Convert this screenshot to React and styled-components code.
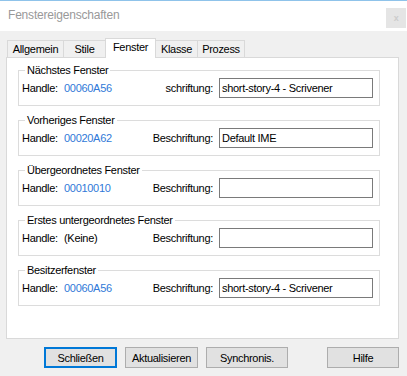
import styled, { createGlobalStyle } from "styled-components";

const GlobalStyle = createGlobalStyle`
  html, body {
    margin: 0;
    padding: 0;
    background: #f0f0f0;
  }
  body {
    font-family: "Liberation Sans", Arial, sans-serif;
    font-size: 11px;
    letter-spacing: -0.3px;
    color: #000;
  }
`;

const TABS = [
  { label: "Allgemein", width: 57 },
  { label: "Stile", width: 43 },
  { label: "Fenster", width: 51, active: true },
  { label: "Klasse", width: 43 },
  { label: "Prozess", width: 48 },
];

const GROUPS = [
  { title: "Nächstes Fenster", handle: "00060A56", label: "schriftung:", caption: "short-story-4 - Scrivener" },
  { title: "Vorheriges Fenster", handle: "00020A62", label: "Beschriftung:", caption: "Default IME" },
  { title: "Übergeordnetes Fenster", handle: "00010010", label: "Beschriftung:", caption: "" },
  { title: "Erstes untergeordnetes Fenster", handle: "(Keine)", none: true, label: "Beschriftung:", caption: "" },
  { title: "Besitzerfenster", handle: "00060A56", label: "Beschriftung:", caption: "short-story-4 - Scrivener" },
];

const BUTTONS = [
  { label: "Schließen", width: 73, gap: 44, primary: true },
  { label: "Aktualisieren", width: 73, gap: 8 },
  { label: "Synchronis.", width: 82, gap: 8 },
  { label: "Hilfe", width: 72, gap: 39 },
];

function App(){
  return(
    <Window>
      <GlobalStyle />
      <TitleBar>
        <Title>Fenstereigenschaften</Title>
        <CloseButton>x</CloseButton>
      </TitleBar>

      <TabStrip>
        { TABS.map(tab => (
          <Tab key={ tab.label } $width={ tab.width } $active={ tab.active }>
            { tab.label }
          </Tab>
        )) }
      </TabStrip>

      <Panel>
        { GROUPS.map(group => (
          <Group key={ group.title }>
            <Legend>{ group.title }</Legend>
            <HandleLabel>Handle:</HandleLabel>
            <HandleValue $none={ group.none }>{ group.handle }</HandleValue>
            <CaptionLabel>{ group.label }</CaptionLabel>
            <TextBox>{ group.caption }</TextBox>
          </Group>
        )) }
      </Panel>

      <ButtonRow>
        { BUTTONS.map(btn => (
          <Button key={ btn.label } $width={ btn.width } $gap={ btn.gap } $primary={ btn.primary }>
            { btn.label }
          </Button>
        )) }
      </ButtonRow>
    </Window>
  );
};

const Window = styled.div`
  width: 407px;
  height: 376px;
  background: #f0f0f0;
  display: flex;
  flex-direction: column;
  overflow: hidden;
`;

const TitleBar = styled.div`
  height: 30px;
  border-top: 1px solid #8fc3ea;
  background: #ffffff;
  display: flex;
  align-items: center;
  justify-content: space-between;
  padding: 0 1px 0 8px;
`;

const Title = styled.div`
  font-size: 12px;
  color: #999999;
  margin-top: -2px;
  letter-spacing: -0.2px;
`;

const CloseButton = styled.div`
  width: 20px;
  height: 20px;
  margin-top: 3px;
  background: #e5e5e5;
  color: #cccccc;
  font-size: 9px;
  font-weight: bold;
  display: flex;
  align-items: center;
  justify-content: center;
`;

const TabStrip = styled.div`
  height: 19px;
  margin-top: 7px;
  padding-left: 7px;
  display: flex;
  align-items: flex-end;
  position: relative;
  z-index: 1;
`;

const Tab = styled.div`
  box-sizing: border-box;
  width: ${ ({ $width }) => $width }px;
  height: ${ ({ $active }) => $active ? 20 : 17 }px;
  margin-left: -1px;
  margin-bottom: ${ ({ $active }) => $active ? -1 : 0 }px;
  border: 1px solid #d9d9d9;
  border-bottom: none;
  background: ${ ({ $active }) => $active ? "#ffffff" : "#f0f0f0" };
  display: flex;
  align-items: center;
  justify-content: center;
  padding-bottom: ${ ({ $active }) => $active ? 3 : 0 }px;
  font-size: 11px;
  position: relative;
  z-index: ${ ({ $active }) => $active ? 2 : 1 };

  &:first-child{
    margin-left: 0;
  }
`;

const Panel = styled.div`
  box-sizing: border-box;
  width: 393px;
  height: 282px;
  margin-left: 6px;
  border: 1px solid #d9d9d9;
  background: #ffffff;
  padding: 12px 18px 0 11px;
  display: flex;
  flex-direction: column;
  gap: 14px;
`;

const Group = styled.div`
  box-sizing: border-box;
  height: 36px;
  border: 1px solid #dcdcdc;
  padding: 7px 6px 7px 3px;
  display: flex;
  align-items: center;
  position: relative;
`;

const Legend = styled.span`
  position: absolute;
  top: -8px;
  left: 6px;
  padding: 0 2px;
  background: #ffffff;
  line-height: 14px;
  font-size: 11px;
`;

const HandleLabel = styled.span`
  width: 42px;
  flex: none;
`;

const HandleValue = styled.span`
  width: 70px;
  flex: none;
  color: ${ ({ $none }) => $none ? "#000000" : "#3079d8" };
`;

const CaptionLabel = styled.span`
  flex: 1;
  text-align: right;
  margin-right: 6px;
  white-space: nowrap;
`;

const TextBox = styled.div`
  box-sizing: border-box;
  width: 154px;
  height: 20px;
  border: 1px solid #7a7a7a;
  background: #ffffff;
  padding: 0 2px;
  display: flex;
  align-items: center;
  white-space: nowrap;
  overflow: hidden;
`;

const ButtonRow = styled.div`
  display: flex;
  margin-top: 8px;
`;

const Button = styled.div`
  box-sizing: border-box;
  width: ${ ({ $width }) => $width }px;
  height: 21px;
  margin-left: ${ ({ $gap }) => $gap }px;
  background: #e1e1e1;
  border: ${ ({ $primary }) => $primary ? "2px solid #0078d7" : "1px solid #adadad" };
  display: flex;
  align-items: center;
  justify-content: center;
  font-size: 11px;
`;

export default App;
